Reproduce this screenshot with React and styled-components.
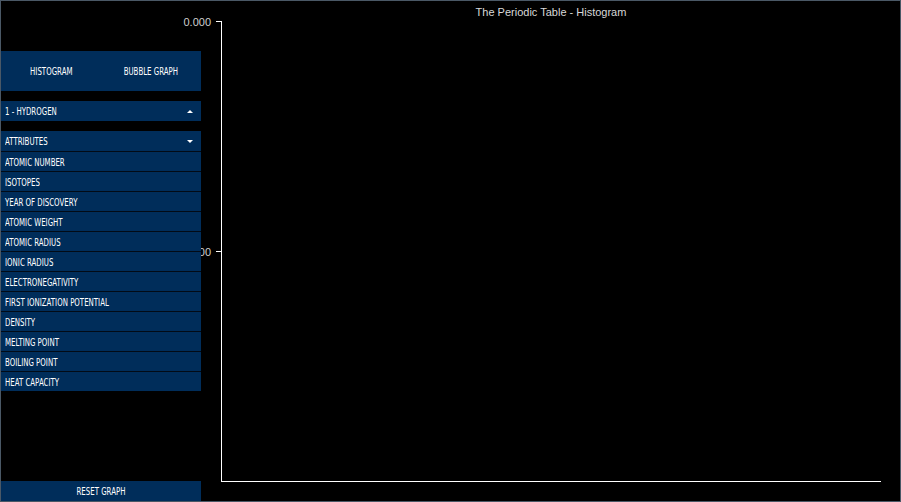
import styled, { createGlobalStyle } from "styled-components";

const GlobalStyle = createGlobalStyle`
  html, body {
    margin: 0;
    padding: 0;
    background: #000;
  }
`;

const Frame = styled.div`
  position: relative;
  box-sizing: border-box;
  width: 901px;
  height: 502px;
  border: 1px solid #4a5866;
  background: #000;
  overflow: hidden;
  display: flex;
`;

const Sidebar = styled.div`
  position: relative;
  z-index: 1;
  width: 200px;
  display: flex;
  flex-direction: column;
  padding-top: 50px;
  gap: 10px;
  font-family: "DejaVu Sans", "Liberation Sans", sans-serif;
  font-size: 10px;
  color: #fff;
  text-transform: uppercase;
`;

// pixel font of the original is narrow: squeeze the label horizontally
const Label = styled.span`
  display: inline-block;
  padding-top: 1px;
  white-space: nowrap;
  transform: scaleX(0.7);
  transform-origin: ${(p) => (p.$center ? "center" : "left")} center;
`;

const Tabs = styled.div`
  height: 40px;
  background: #002d5a;
  display: flex;
`;

const Tab = styled.div`
  flex: 1;
  display: flex;
  align-items: center;
  justify-content: center;
`;

const Row = styled.div`
  box-sizing: border-box;
  height: 20px;
  background: #002d5a;
  display: flex;
  align-items: center;
  justify-content: ${(p) => (p.$center ? "center" : "space-between")};
  padding: 0 5px 0 4px;
  border-top: ${(p) => (p.$divider ? "1px solid #020b16" : "none")};
`;

const List = styled.div`
  display: flex;
  flex-direction: column;
`;

const Arrow = styled.span`
  width: 0;
  height: 0;
  margin-right: 3px;
  margin-top: 1px;
  border-left: 3px solid transparent;
  border-right: 3px solid transparent;
  ${(p) =>
    p.$up
      ? "border-bottom: 3px solid #fff;"
      : "border-top: 3px solid #fff;"}
`;

const ResetRow = styled(Row)`
  margin-top: auto;
`;

const Chart = styled.svg`
  position: absolute;
  top: 0;
  left: 0;
  width: 899px;
  height: 500px;
  font-family: "Liberation Sans", Arial, sans-serif;
`;

const attributes = [
  "Atomic Number",
  "Isotopes",
  "Year of Discovery",
  "Atomic Weight",
  "Atomic Radius",
  "Ionic Radius",
  "Electronegativity",
  "First Ionization Potential",
  "Density",
  "Melting Point",
  "Boiling Point",
  "Heat Capacity",
];

const ticks = [20, 250];

export default function App() {
  return (
    <>
      <GlobalStyle />
      <Frame>
        <Chart viewBox="0 0 899 500">
          <text x="550" y="15" fill="#d8d8d8" fontSize="11" textAnchor="middle">
            The Periodic Table - Histogram
          </text>
          <rect x="220" y="20" width="1" height="460" fill="#fff" />
          <rect x="220" y="480" width="660" height="1" fill="#fff" />
          {ticks.map((y) => (
            <g key={y}>
              <rect x="215" y={y} width="5" height="1" fill="#fff" />
              <text x="210" y={y + 5} fill="#cfcfcf" fontSize="11" textAnchor="end">
                0.000
              </text>
            </g>
          ))}
        </Chart>
        <Sidebar>
          <Tabs>
            <Tab><Label $center>Histogram</Label></Tab>
            <Tab><Label $center>Bubble Graph</Label></Tab>
          </Tabs>
          <Row>
            <Label>1 - Hydrogen</Label>
            <Arrow $up />
          </Row>
          <List>
            <Row>
              <Label>Attributes</Label>
              <Arrow />
            </Row>
            {attributes.map((a) => (
              <Row key={a} $divider>
                <Label>{a}</Label>
              </Row>
            ))}
          </List>
          <ResetRow $center>
            <Label $center>Reset Graph</Label>
          </ResetRow>
        </Sidebar>
      </Frame>
    </>
  );
}
